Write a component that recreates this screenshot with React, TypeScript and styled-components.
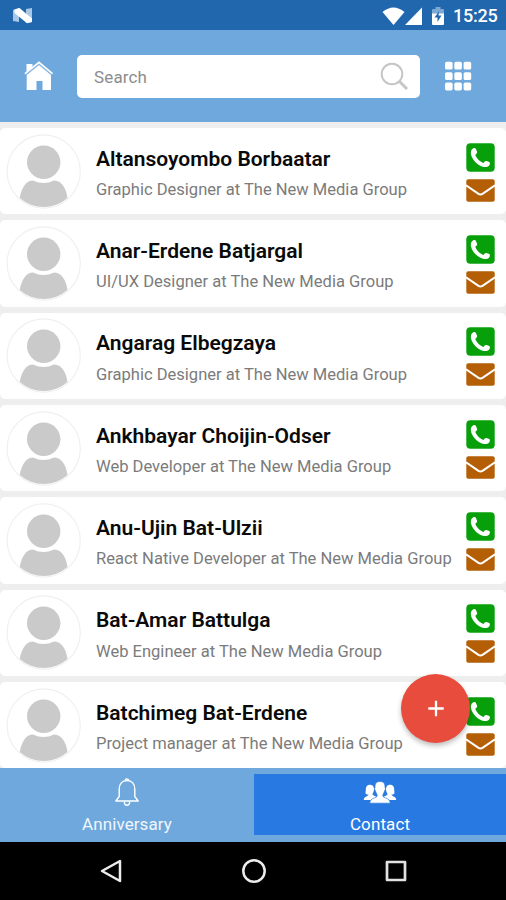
import React from 'react';
import styled, { createGlobalStyle } from 'styled-components';

const GlobalStyle = createGlobalStyle`
  * { box-sizing: border-box; }
  body { margin: 0; background: #000; font-family: Roboto, sans-serif; }
  svg { display: block; flex: none; }
`;

const Screen = styled.div`
  position: relative;
  width: 506px;
  height: 900px;
  display: flex;
  flex-direction: column;
  overflow: hidden;
  background: #eeeeee;
`;

const StatusBar = styled.div`
  height: 30px;
  flex: none;
  display: flex;
  align-items: center;
  justify-content: space-between;
  padding: 1px 9px 0 13px;
  background: #2167ae;
  color: #fff;
`;

const StatusIcons = styled.div`
  display: flex;
  align-items: center;
`;

const BatteryGap = styled.div`
  margin-left: 10px;
`;

const Clock = styled.span`
  margin-left: 9px;
  padding-top: 1px;
  width: 44px;
  font-size: 18px;
  line-height: 22px;
  font-weight: 500;
  white-space: nowrap;
  letter-spacing: -0.25px;
`;

const Header = styled.header`
  height: 92px;
  flex: none;
  display: flex;
  align-items: center;
  padding: 0 34px 0 24px;
  background: #6fa8dc;
`;

const SearchBox = styled.div`
  width: 344px;
  height: 43px;
  margin: 0 24px;
  padding: 1px 11px 0 17px;
  display: flex;
  align-items: center;
  justify-content: space-between;
  border-radius: 5px;
  background: #fff;
  color: #8c8c8c;
  font-size: 17px;
  letter-spacing: 0.15px;
`;

const List = styled.main`
  height: 646px;
  flex: none;
  padding-top: 6px;
  display: flex;
  flex-direction: column;
  gap: 6px;
  overflow: hidden;
`;

const Card = styled.article`
  height: 86.33px;
  flex: none;
  display: flex;
  align-items: center;
  padding: 0 11px 0 6px;
  border-radius: 5px;
  background: #fff;
`;

const Details = styled.div`
  flex: 1;
  margin-left: 15px;
  white-space: nowrap;
`;

const Name = styled.div`
  color: #0a0a0a;
  font-size: 21px;
  line-height: 24px;
  font-weight: 600;
  padding-top: 4.500px;
`;

const Role = styled.div`
  margin-top: 8.500px;
  color: #7b7b7b;
  font-size: 16.550px;
  line-height: 21px;
`;

const Actions = styled.div`
  display: flex;
  flex-direction: column;
  gap: 7px;
  padding-top: 2px;
`;

const TabBar = styled.nav`
  height: 74px;
  flex: none;
  display: grid;
  grid-template-columns: 254px 252px;
  padding: 6px 0 7px;
  background: #6fa8dc;
`;

const Tab = styled.div<{ $active?: boolean }>`
  display: flex;
  flex-direction: column;
  align-items: center;
  padding-top: 4px;
  gap: 7px;
  background: ${p => (p.$active ? '#2879e2' : 'transparent')};
  color: ${p => (p.$active ? '#fff' : '#f0f6fc')};
  font-size: 17px;
  line-height: 21px;
  letter-spacing: 0.1px;
`;

const SystemNav = styled.div`
  height: 58px;
  flex: none;
  display: flex;
  align-items: center;
  justify-content: space-between;
  padding: 0 98px 0 99px;
  background: #000;
`;

const AddButton = styled.div`
  position: absolute;
  left: 401px;
  top: 674px;
  width: 69px;
  height: 69px;
  display: flex;
  align-items: center;
  justify-content: center;
  border-radius: 50%;
  background: #e74c3c;
  box-shadow: 0 3px 5px rgba(0, 0, 0, 0.25);
`;

const NougatIcon = () => (
  <svg width="20" height="18" viewBox="0 0 20 18">
    <path d="M0 3 6 1V15L0 14ZM13 2 19 1V15L13 16Z" fill="#a9c7e6" />
    <path d="M1.500 2.500 6.500 1 19 11.500V15L14 16.200 1.500 6Z" fill="#fff" />
  </svg>
);

const WifiIcon = () => (
  <svg width="23" height="18" viewBox="0 0 23 18">
    <path d="M0.5 5Q11.5-4 22.5 5L11.5 18Z" fill="#fff" />
  </svg>
);

const SignalIcon = () => (
  <svg width="17" height="18" viewBox="0 0 17 18">
    <path d="M17 .5V18H0Z" fill="#fff" />
  </svg>
);

const BatteryIcon = () => (
  <svg width="12" height="18" viewBox="0 0 12 18">
    <path d="M3.5 0h5v2H11q1 0 1 1v5H0V3Q0 2 1 2h2.500Z" fill="#7da8d3" />
    <path d="M0 6.500h12V17q0 1-1 1H1q-1 0-1-1Z" fill="#fff" />
    <path d="M7.200 4 2.500 10.500h3V15l4-6.500h-3Z" fill="#2167ae" />
  </svg>
);

const HomeIcon = () => (
  <svg width="29" height="30" viewBox="0 0 29 30">
    <path d="M2.500 3h6v5L2.500 12Z" fill="#fff" />
    <path d="M2.700 14 15 4l12 10v15h-8.500V20h-6v9H2.700Z" fill="#fff" />
    <path d="M1 13.400 15 2.400 28.500 13.400" fill="none" stroke="#8dbae5" strokeWidth="2.400" />
    <path d="M1 12.600 15 1.300 28.500 12.600" fill="none" stroke="#fff" strokeWidth="1.500" />
  </svg>
);

const SearchIcon = () => (
  <svg width="29" height="29" viewBox="0 0 29 29" fill="none" stroke="#c6c6c6">
    <circle cx="12" cy="12" r="10.300" strokeWidth="2" />
    <path d="m19.500 19.500 7.500 7.500" strokeWidth="3" />
  </svg>
);

const GridIcon = () => (
  <svg width="28" height="30" viewBox="0 0 28 30" fill="#fff">
    {[0.8, 11.3, 21.6].map(y =>
      [1, 10.3, 19.6].map(x => (
        <rect key={`${x}-${y}`} x={x} y={y} width="7.600" height="7.800" rx="1.700" />
      )),
    )}
  </svg>
);

const Avatar = () => (
  <svg width="75" height="75" viewBox="0 0 75 75">
    <circle cx="37.700" cy="37.500" r="36.600" fill="#fff" stroke="#f0f0f0" strokeWidth="1.200" />
    <circle cx="37.700" cy="28.200" r="16.700" fill="#cacaca" />
    <path d="M13.700 64C16 52 21 46.500 27 46.500Q37.500 51.500 48 46.500C54 46.500 60 52 61.500 64A36 36 0 0 1 13.700 64Z" fill="#cacaca" />
  </svg>
);

const PhoneIcon = () => (
  <svg width="29" height="29" viewBox="0 0 29 29">
    <rect x="0.300" y="0.300" width="28.400" height="28.400" rx="4" fill="#07a00b" />
    <path d="M7 5.500C5 6.500 4.500 9 5 11.500C6.300 17.500 12.500 23 18 24C20.500 24.300 23 23.500 23.700 21.500C24 20.500 24 19.500 23.300 19L20.500 18Q19.500 17.600 18.700 18.500L17.500 20C14.500 19 10.500 15.500 9.300 11.700L10.700 10.500Q11.500 9.700 11 8.500L9.800 5.700C9.300 4.800 8 5 7 5.500Z" fill="#fff" />
  </svg>
);

const MailIcon = () => (
  <svg width="29" height="23" viewBox="0 0 29 23">
    <rect x="0.300" y="0.300" width="28.400" height="22.400" rx="2" fill="#b45f06" />
    <path d="M0 6.200 12.500 14.800Q14.500 16 16.500 14.800L29 6.200" fill="none" stroke="#fff" strokeWidth="2" />
  </svg>
);

const BellIcon = () => (
  <svg width="26" height="29" viewBox="0 0 26 29" fill="none" stroke="#fff" strokeWidth="1.400" strokeLinejoin="round">
    <path d="M13 2.500C8 2.500 5.200 6 5.200 11V18.500L1.800 23H24.200L20.800 18.500V11C20.800 6 18 2.500 13 2.500Z" />
    <path d="M10.300 23.500C10.300 28.500 15.700 28.500 15.700 23.500M11.500 2C11.500.5 14.500.5 14.500 2" />
  </svg>
);

const PeopleIcon = () => (
  <svg width="34" height="29" viewBox="0 0 34 29" fill="#fff">
    <path d="M6 6.800C8.500 6.200 11 7.500 11 11C11 13.500 10 14.500 9.500 16C10 18 13 18 14 19L10 22H.8C.8 18 5 19 5.500 16.500C1.800 16.500 2.500 15 2.800 12C2.800 9 3.500 7.500 6 6.800Z" />
    <path d="M28 6.800C25.500 6.200 23 7.500 23 11C23 13.500 24 14.500 24.500 16C24 18 21 18 20 19L24 22H33.200C33.200 18 29 19 28.500 16.500C32.200 16.500 31.500 15 31.200 12C31.200 9 30.500 7.500 28 6.800Z" />
    <path d="M17 3.500C20.500 3.500 22.300 5.500 22 9.500C23 11 22 12 21.500 13C21.200 15 19.800 15.500 19.800 18C20.500 20.500 27 19.500 27.200 25.200H6.800C7 19.500 13.500 20.500 14.200 18C14.200 15.500 12.800 15 12.500 13C12 12 11 11 12 9.500C11.700 5.500 13.500 3.500 17 3.500Z" stroke="#2879e2" strokeWidth=".7" />
  </svg>
);

const PlusIcon = () => (
  <svg width="18" height="18" viewBox="0 0 18 18">
    <path d="M9 .8v15.400M1.300 8.500h15.400" stroke="#fff" strokeWidth="2.300" />
  </svg>
);

const BackIcon = () => (
  <svg width="24" height="26" viewBox="0 0 24 26">
    <path d="M21 3v20L3 13Z" fill="none" stroke="#ececec" strokeWidth="2.500" strokeLinejoin="round" />
  </svg>
);

const CircleIcon = () => (
  <svg width="26" height="26" viewBox="0 0 26 26">
    <circle cx="13" cy="13" r="10.700" fill="none" stroke="#ececec" strokeWidth="2.500" />
  </svg>
);

const SquareIcon = () => (
  <svg width="24" height="24" viewBox="0 0 24 24">
    <rect x="3" y="3" width="18" height="18" fill="none" stroke="#e2e2e2" strokeWidth="2.700" strokeLinejoin="round" />
  </svg>
);

const contacts = [
  { name: 'Altansoyombo Borbaatar', role: 'Graphic Designer' },
  { name: 'Anar-Erdene Batjargal', role: 'UI/UX Designer' },
  { name: 'Angarag Elbegzaya', role: 'Graphic Designer' },
  { name: 'Ankhbayar Choijin-Odser', role: 'Web Developer' },
  { name: 'Anu-Ujin Bat-Ulzii', role: 'React Native Developer' },
  { name: 'Bat-Amar Battulga', role: 'Web Engineer' },
  { name: 'Batchimeg Bat-Erdene', role: 'Project manager' },
];

export default function App() {
  return (
    <Screen>
      <GlobalStyle />
      <StatusBar>
        <NougatIcon />
        <StatusIcons>
          <WifiIcon />
          <SignalIcon />
          <BatteryGap>
            <BatteryIcon />
          </BatteryGap>
          <Clock>15:25</Clock>
        </StatusIcons>
      </StatusBar>
      <Header>
        <HomeIcon />
        <SearchBox>
          <span>Search</span>
          <SearchIcon />
        </SearchBox>
        <GridIcon />
      </Header>
      <List>
        {contacts.map(c => (
          <Card key={c.name}>
            <Avatar />
            <Details>
              <Name>{c.name}</Name>
              <Role>{`${c.role} at The New Media Group`}</Role>
            </Details>
            <Actions>
              <PhoneIcon />
              <MailIcon />
            </Actions>
          </Card>
        ))}
      </List>
      <TabBar>
        <Tab>
          <BellIcon />
          <span>Anniversary</span>
        </Tab>
        <Tab $active>
          <PeopleIcon />
          <span>Contact</span>
        </Tab>
      </TabBar>
      <SystemNav>
        <BackIcon />
        <CircleIcon />
        <SquareIcon />
      </SystemNav>
      <AddButton>
        <PlusIcon />
      </AddButton>
    </Screen>
  );
}
